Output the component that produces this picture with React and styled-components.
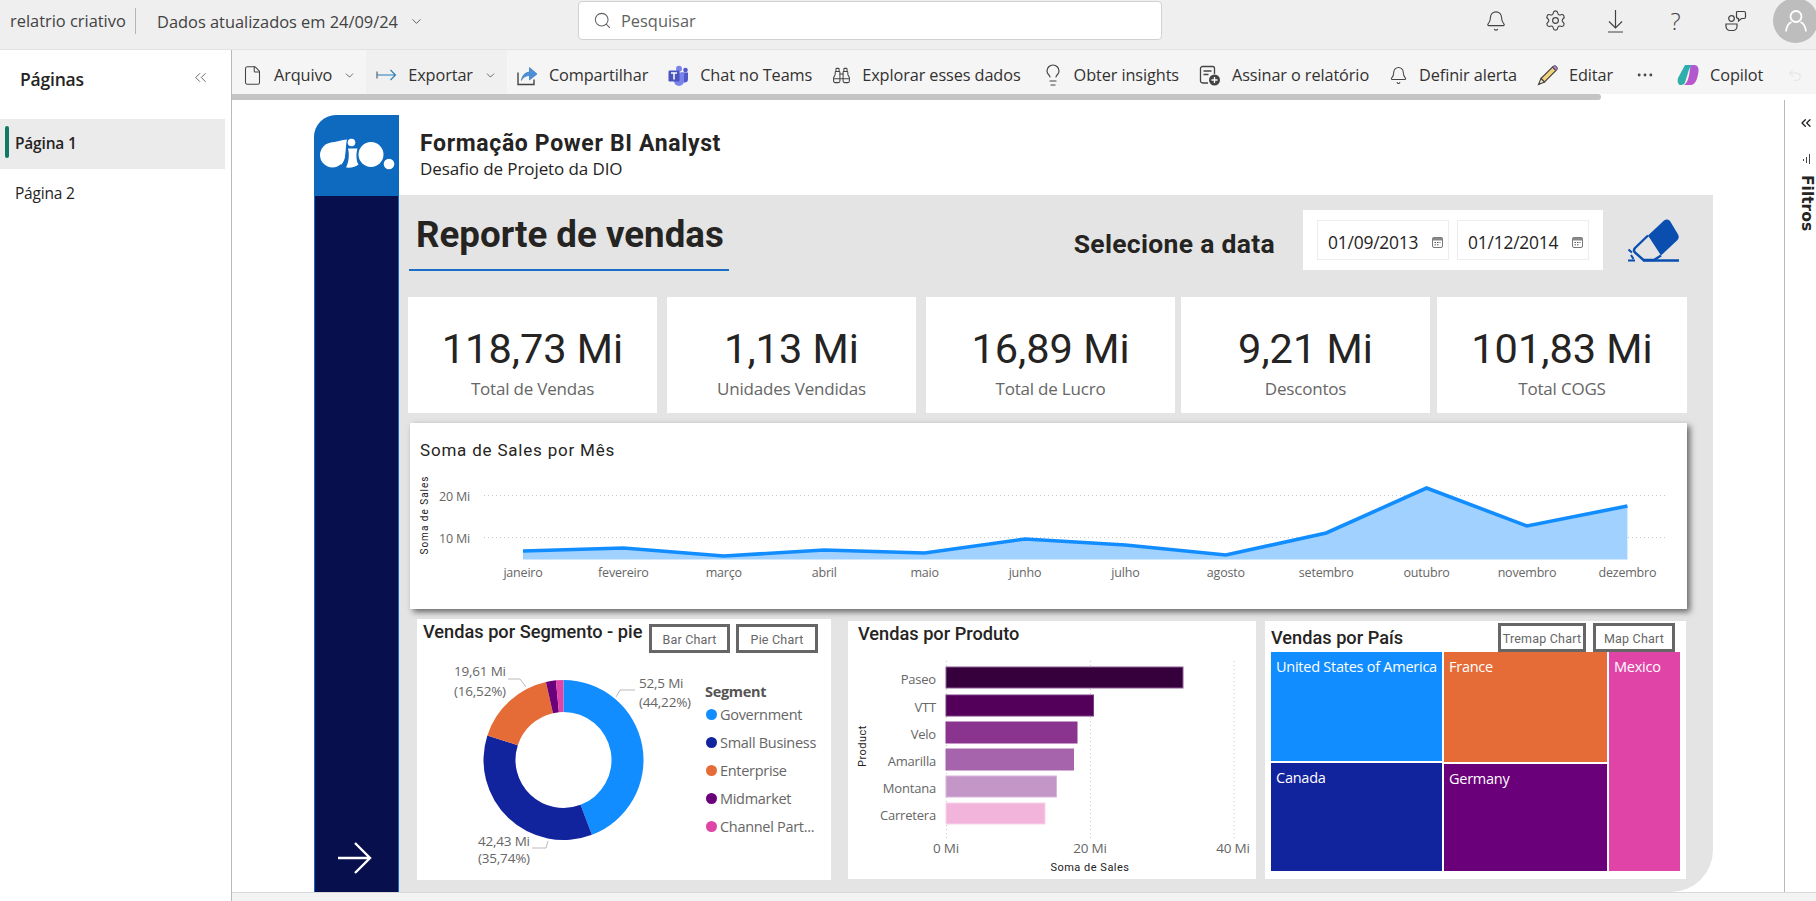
import React from 'react';
import styled, { createGlobalStyle } from 'styled-components';
import {
  Search, ChevronDown, ChevronsLeft, Bell, Settings, File, Binoculars, Lightbulb, Ellipsis, Undo2,
} from 'lucide-react';

const UI = `"Open Sans", "Noto Sans", sans-serif`;
const DIN = `Roboto, "Noto Sans", sans-serif`;

const Global = createGlobalStyle`
  html, body { margin: 0; padding: 0; background: #fff; }
  body { font-family: ${UI}; color: #333; }
  * { box-sizing: border-box; }
`;

const Page = styled.div`
  width: 1816px;
  height: 901px;
  display: flex;
  flex-direction: column;
  overflow: hidden;
`;

const TopBar = styled.header`
  height: 50px;
  flex: none;
  display: flex;
  align-items: flex-start;
  background: #efefef;
  border-bottom: 1px solid #e2e2e2;
  font-size: 16.4px;
  color: #424242;
`;

const AppName = styled.span`
  margin-top: 8px;
  padding: 0 0 0 10px;
  width: 136px;
  height: 26px;
  line-height: 25px;
  white-space: nowrap;
  border-right: 1px solid #b5b5b5;
`;

const Updated = styled.span`
  margin: 8px 0 0 21px;
  width: 421px;
  height: 26px;
  line-height: 25px;
  display: flex;
  align-items: center;
  gap: 11px;
  white-space: nowrap;
`;

const SearchBox = styled.div`
  margin-top: 1px;
  width: 584px;
  height: 39px;
  display: flex;
  align-items: center;
  gap: 9px;
  padding-left: 14px;
  background: #fff;
  border: 1px solid #d1d1d1;
  border-radius: 4px;
  color: #616161;
`;

const TopIcons = styled.div`
  margin: -2px 0 0 auto;
  display: flex;
  align-items: center;
  gap: 37px;
`;

const TopIcon = styled.span`
  width: 23px;
  height: 26px;
  display: flex;
  align-items: center;
  justify-content: center;
  color: #424242;
  font-size: 24px;
  font-weight: 300;
`;

const Avatar = styled.span`
  width: 45px;
  height: 45px;
  margin: 0 -2px 0 -11px;
  border-radius: 50%;
  background: #bdbdbd;
  display: flex;
  align-items: center;
  justify-content: center;
`;

const Body = styled.div`
  flex: 1;
  display: flex;
  min-height: 0;
`;

const Sidebar = styled.aside`
  width: 232px;
  flex: none;
  border-right: 1px solid #b9b9b9;
  background: #fff;
`;

const SideHead = styled.div`
  height: 69px;
  padding: 17px 21px 0 20px;
  display: flex;
  justify-content: space-between;
  align-items: flex-start;
  font-size: 17.5px;
  font-weight: 600;
  color: #252423;
  letter-spacing: -0.2px;
  svg { color: #555; margin-top: 1px; }
`;

const PageItem = styled.div`
  width: 225px;
  height: 50px;
  padding: 0 0 2px 15px;
  display: flex;
  align-items: center;
  position: relative;
  font-size: 15.5px;
  letter-spacing: -0.2px;
  font-weight: ${(p) => (p.$active ? 600 : 400)};
  background: ${(p) => (p.$active ? '#ebebeb' : 'transparent')};
  color: #252423;
  &::before {
    content: '';
    display: ${(p) => (p.$active ? 'block' : 'none')};
    position: absolute;
    left: 5px;
    top: 7px;
    width: 4px;
    height: 32px;
    border-radius: 2px;
    background: #117865;
  }
`;

const Main = styled.main`
  flex: 1;
  display: flex;
  flex-direction: column;
  min-width: 0;
`;

const Toolbar = styled.nav`
  height: 44px;
  flex: none;
  display: flex;
  align-items: stretch;
  background: #f5f5f5;
  font-size: 16.3px;
  letter-spacing: -0.1px;
  color: #323130;
`;

const ToolItem = styled.span`
  display: flex;
  align-items: center;
  gap: ${(p) => p.$gap || 11}px;
  padding: 6px ${(p) => p.$pad ?? 10}px 0;
  white-space: nowrap;
  background: ${(p) => (p.$hover ? '#f0f0f0' : 'transparent')};
`;

const ScrollTrack = styled.div`
  height: 6px;
  flex: none;
  background: #fff;
`;

const ScrollThumb = styled.div`
  width: 1369px;
  height: 6px;
  background: #c4c4c4;
  border-radius: 0 3px 3px 0;
`;

const Content = styled.div`
  flex: 1;
  display: flex;
  min-height: 0;
`;

const Canvas = styled.div`
  flex: 1;
  padding: 15px 0 0 82px;
  display: flex;
  min-width: 0;
`;

const FilterRail = styled.div`
  width: 32px;
  flex: none;
  border-left: 1px solid #b9b9b9;
  display: flex;
  flex-direction: column;
  align-items: center;
  padding: 15px 0 0 10px;
  color: #252423;
`;

const FilterBars = styled.svg`
  margin: 22px 0 0 2px;
`;

const FilterText = styled.span`
  writing-mode: vertical-rl;
  font-family: "DejaVu Sans", sans-serif;
  font-size: 15.5px;
  font-weight: 700;
  line-height: 16px;
  margin: 10px 0 0 2px;
`;

const ReportRail = styled.div`
  width: 85px;
  flex: none;
  display: flex;
  flex-direction: column;
`;

const LogoBlock = styled.div`
  height: 81px;
  background: #0d6abf;
  border-radius: 22px 0 0 0;
  overflow: hidden;
`;

const NavyBlock = styled.div`
  flex: 1;
  background: #07104d;
  border: 1px solid #0d6abf;
  border-width: 0 1px;
  display: flex;
  align-items: flex-end;
  padding: 0 0 18px 23px;
`;

const ReportBody = styled.div`
  width: 1314px;
  flex: none;
  display: flex;
  flex-direction: column;
`;

const ReportHead = styled.div`
  height: 80px;
  flex: none;
  padding: 15px 0 0 21px;
`;

const ReportTitle = styled.h1`
  margin: 0;
  font: 700 23px/27px ${DIN};
  letter-spacing: 0.65px;
  color: #252423;
`;

const ReportSub = styled.p`
  margin: 1px 0 0;
  font-size: 17px;
  line-height: 22px;
  letter-spacing: -0.1px;
  color: #252423;
`;

const GrayPanel = styled.section`
  flex: 1;
  background: #e4e4e4;
  border-radius: 0 0 42px 0;
  min-height: 0;
`;

const HeadRow = styled.div`
  height: 102px;
  display: flex;
  align-items: flex-start;
  padding-right: 33px;
`;

const SalesTitle = styled.h2`
  margin: 0 0 0 10px;
  width: 320px;
  height: 76px;
  padding: 18px 0 0 7px;
  border-bottom: 2px solid #1c6fc9;
  font: 700 36.7px/44px ${DIN};
  color: #252423;
`;

const DateLabel = styled.span`
  margin: 33px 28px 0 auto;
  font: 700 26.5px/32px ${DIN};
  letter-spacing: 0.3px;
  color: #252423;
`;

const DateBox = styled.div`
  margin-top: 15px;
  width: 300px;
  height: 60px;
  background: #fff;
  display: flex;
  align-items: center;
  justify-content: center;
  gap: 8px;
`;

const DateInput = styled.div`
  width: 132px;
  height: 40px;
  border: 1px solid #ededed;
  display: flex;
  align-items: center;
  justify-content: space-between;
  padding: 4px 5px 0 10px;
  font-size: 17.4px;
  letter-spacing: -0.2px;
  color: #252423;
`;

const EraserWrap = styled.span`
  margin: 24px 0 0 25px;
  display: block;
  height: 43px;
`;

const KpiRow = styled.div`
  display: flex;
  margin-left: 9px;
`;

const KpiCard = styled.div`
  width: ${(p) => p.$w}px;
  margin-right: ${(p) => p.$gap}px;
  height: 116px;
  background: #fff;
  display: flex;
  flex-direction: column;
  align-items: center;
  padding-top: 26px;
  flex: none;
`;

const KpiValue = styled.span`
  font: 400 41.5px/52px ${DIN};
  color: #252423;
`;

const KpiLabel = styled.span`
  margin-top: 2px;
  font-size: 17px;
  line-height: 24px;
  letter-spacing: -0.2px;
  color: #666;
`;

const LineCard = styled.div`
  margin: 10px 0 0 11px;
  width: 1277px;
  height: 186px;
  padding-top: 17px;
  background: #fff;
  box-shadow: 3px 3px 6px rgba(0, 0, 0, 0.55);
`;

const CardTitle = styled.div`
  margin-left: 10px;
  height: 26px;
  font: 400 17px/20px ${DIN};
  letter-spacing: 0.8px;
  color: #252423;
`;

const BottomRow = styled.div`
  margin-top: 10px;
  padding-left: 18px;
  display: flex;
  align-items: flex-start;
`;

const Panel = styled.div`
  flex: none;
  width: ${(p) => p.$w}px;
  height: ${(p) => p.$h}px;
  margin-top: ${(p) => p.$top || 0}px;
  margin-right: ${(p) => p.$gap || 0}px;
  background: #fff;
`;

const PanelHead = styled.div`
  display: flex;
  height: ${(p) => p.$h}px;
`;

const PanelTitle = styled.div`
  width: ${(p) => p.$w}px;
  margin-left: ${(p) => p.$left || 6}px;
  margin-top: ${(p) => p.$top || 0}px;
  flex: none;
  overflow: hidden;
  white-space: nowrap;
  font: 500 18.2px/24px ${DIN};
  color: #252423;
`;

const ToggleBtn = styled.span`
  flex: none;
  width: ${(p) => p.$w}px;
  height: 29px;
  margin: ${(p) => p.$top}px ${(p) => p.$right}px 0 0;
  padding-top: 1px;
  border: 3px solid #666;
  display: flex;
  align-items: center;
  justify-content: center;
  white-space: nowrap;
  font: 400 12.5px ${DIN};
  letter-spacing: 0.2px;
  color: #666;
  background: #fff;
`;

const SegBody = styled.div`
  display: flex;
`;

const Legend = styled.div`
  padding: 27px 0 0 3px;
  font-size: 14.5px;
  letter-spacing: -0.3px;
  color: #666;
`;

const LegendHead = styled.div`
  font-weight: 700;
  color: #555;
  line-height: 22px;
  margin-bottom: -2px;
`;

const LegendRow = styled.div`
  height: 27.8px;
  display: flex;
  align-items: center;
  gap: 3px;
  margin-left: 1px;
  white-space: nowrap;
  &::before {
    content: '';
    width: 11px;
    height: 11px;
    border-radius: 50%;
    background: ${(p) => p.$c};
  }
`;

const Treemap = styled.div`
  display: flex;
  gap: 2px;
  margin-left: 6px;
  height: 219px;
`;

const TreeCol = styled.div`
  width: ${(p) => p.$w}px;
  display: flex;
  flex-direction: column;
  gap: 2px;
`;

const TreeCell = styled.div`
  flex: ${(p) => (p.$h ? `0 0 ${p.$h}px` : 1)};
  padding: 5px 5px;
  background: ${(p) => p.$c};
  color: #fff;
  font-size: 14.5px;
  line-height: 20px;
  letter-spacing: -0.25px;
  white-space: nowrap;
  overflow: hidden;
`;

const BottomBar = styled.div`
  height: 9px;
  flex: none;
  background: #f3f3f3;
  border-top: 1px solid #d9d9d9;
`;

const ChartSvg = styled.svg`
  display: block;
  flex: none;
`;

const ChartLabel = styled.text`
  font-family: ${UI};
  font-size: ${(p) => p.$size || 12.5}px;
  letter-spacing: -0.2px;
  fill: #666;
`;

const AxisTitle = styled.text`
  font-family: ${DIN};
  font-size: ${(p) => p.$size || 11}px;
  font-weight: 400;
  fill: #222;
  letter-spacing: ${(p) => p.$track || 0.5}px;
`;

// ---- icons drawn by hand
const DioLogo = () => (
  <svg width="85" height="81" viewBox="0 0 85 81">
    <g fill="#fff">
      <circle cx="18.500" cy="40" r="12.500" />
      <path d="M16 28C22 27 28 25 33 24.500C31 32 33 44 27 50Z" />
      <circle cx="37.500" cy="27.500" r="3.800" />
      <path d="M34 33.500L43.500 33.500C42 38 42 46 44.500 49.500C42 52 37 53 32 52.500C35 47 35.500 39 34 33.500Z" />
      <circle cx="57" cy="39.500" r="12.500" />
      <circle cx="75" cy="49" r="5.300" />
    </g>
  </svg>
);

const ExportIcon = () => (
  <svg width="21" height="14" viewBox="0 0 21 14" fill="none" stroke="#2b7cb3" strokeWidth="1.1">
    <path d="M1 3.500v7" stroke="#555" />
    <path d="M1 7h18.500M14.500 2l5 5-5 5" />
  </svg>
);

const ShareIcon = () => (
  <svg width="21" height="21" viewBox="0 0 21 21" fill="none">
    <path d="M1 7.500v12h16v-5" stroke="#444" strokeWidth="1.400" />
    <path d="M4.500 15.500c.5-5 3.500-8 8-8.500V2.500l7.500 6.500-7.500 6v-4.500c-3.500 0-6 1.500-8 4.500z" fill="#4a90d9" stroke="#2b6fb0" strokeWidth=".6" />
  </svg>
);

const TeamsIcon = () => (
  <svg width="21" height="21" viewBox="0 0 21 21">
    <circle cx="11" cy="3.800" r="3" fill="#7b83eb" />
    <circle cx="17.500" cy="5" r="2.300" fill="#5059c9" />
    <path d="M13 7.500h7v6.500a3.500 3.500 0 0 1-7 0z" fill="#5059c9" />
    <path d="M6 7.500h10v8.500a5 5 0 0 1-10 0z" fill="#7b83eb" />
    <rect x="0.500" y="5.500" width="11" height="11" rx="1.200" fill="#4b53bc" />
    <path d="M3 8h6M6 8v6.500" stroke="#fff" strokeWidth="1.500" />
  </svg>
);

const SubscribeIcon = () => (
  <svg width="22" height="21" viewBox="0 0 22 21" fill="none">
    <path d="M9 18H3.500A2 2 0 0 1 1.500 16V3.500A2 2 0 0 1 3.500 1.500h10a2 2 0 0 1 2 2V9" stroke="#444" strokeWidth="1.300" />
    <path d="M4.500 6h8M4.500 9.500h5" stroke="#444" strokeWidth="1.300" />
    <circle cx="15.500" cy="15" r="5.500" fill="#444" />
    <path d="M15.500 12v6M12.500 15h6" stroke="#fff" strokeWidth="1.300" />
  </svg>
);

const PencilIcon = () => (
  <svg width="21" height="21" viewBox="0 0 21 21">
    <path d="M4 13.500L15.500 2l3.500 3.500L7.500 17z" fill="#f2d27a" stroke="#444" strokeWidth="1.100" />
    <path d="M15.500 2l1-1a1.500 1.500 0 0 1 2.200 0l1.300 1.300a1.500 1.500 0 0 1 0 2.200l-1 1z" fill="#b77fc9" stroke="#444" strokeWidth="1" />
    <path d="M4 13.500L1.500 19.500 7.500 17z" fill="#f7e8c4" stroke="#444" strokeWidth="1.100" />
    <path d="M1.500 19.500l.8-2 1.200 1.200z" fill="#333" />
  </svg>
);

const CopilotIcon = () => (
  <svg width="22" height="22" viewBox="0 0 22 22" fill="none">
    <path d="M8 1h7.500c-2.500 2-4 5-5 9.500L8.500 17c-.6 2.500-2 4-4.500 4H3C.8 20.500 .2 17 1 14z" fill="url(#cpA)" />
    <path d="M15 1h2.500c3 0 4.500 3 4 6.500-.6 5-2 9-3.500 11-1 1.500-2.500 2.500-4 2.500H7c2.500-1.500 4-5 5-9.500l1-6.500c.3-2 .8-3.500 2-4z" fill="url(#cpB)" />
    <defs>
      <linearGradient id="cpA" x1="13" y1="1" x2="2" y2="20">
        <stop stopColor="#1e9be8" />
        <stop offset=".5" stopColor="#3fbf78" />
        <stop offset="1" stopColor="#f7c52e" />
      </linearGradient>
      <linearGradient id="cpB" x1="20" y1="2" x2="8" y2="21">
        <stop stopColor="#5a6ff0" />
        <stop offset=".55" stopColor="#d44fc0" />
        <stop offset="1" stopColor="#f7603f" />
      </linearGradient>
    </defs>
  </svg>
);

const DownloadIcon = () => (
  <svg width="17" height="24" viewBox="0 0 17 24" fill="none" stroke="#424242" strokeWidth="1.200">
    <path d="M8.500 1v18M2 12.500L8.500 19l6.500-6.500M1 23h15" />
  </svg>
);

const PeopleChatIcon = () => (
  <svg width="22" height="22" viewBox="0 0 22 22" fill="none" stroke="#424242" strokeWidth="1.200">
    <circle cx="6.500" cy="8.500" r="2.800" />
    <path d="M1 14h11v2.500a4 4 0 0 1-4 4H5a4 4 0 0 1-4-4z" />
    <path d="M11.500 1.500h7.500a1.500 1.500 0 0 1 1.500 1.500v4a1.500 1.500 0 0 1-1.500 1.500h-2.500l-3 2.500v-2.500a2 2 0 0 1-2-2V3a1.500 1.500 0 0 1 .5-1.500z" />
  </svg>
);

const AvatarIcon = () => (
  <svg width="22" height="22" viewBox="0 0 22 22" fill="none" stroke="#fff" strokeWidth="1.800">
    <circle cx="11" cy="6.500" r="5.500" />
    <path d="M1 21.500c.5-5 2.500-8 5.500-9.500M21 21.500c-.5-5-2.500-8-5.500-9.500" />
  </svg>
);

const CalendarIcon = () => (
  <svg width="11" height="11" viewBox="0 0 11 11">
    <rect x=".5" y=".5" width="10" height="10" rx="1.500" fill="#fff" stroke="#777" />
    <rect x=".5" y=".5" width="10" height="3" fill="#888" />
    <path d="M2.500 5.500h1.500M5 5.500h1.500M7.500 5.500h1M2.500 7.800h1.500M5 7.800h1.500" stroke="#555" />
  </svg>
);

const EraserIcon = () => (
  <svg width="52" height="43" viewBox="0 0 52 43" fill="none">
    <path d="M20 16.500L36 1.500Q39 -.5 42 2L49.500 14.500Q52 18 49.500 21L33 36.500Z" fill="#0a4fb0" />
    <path d="M20 16.500L7 29Q5 31.500 7 33.500L15.500 41H26L33 36.500" stroke="#0a4fb0" strokeWidth="2.400" strokeLinejoin="round" />
    <path d="M15 41.500H51" stroke="#0a4fb0" strokeWidth="2.400" />
    <path d="M0.500 30.500l3.500 3M3 36l2.500 4M0 41.500h7" stroke="#0a4fb0" strokeWidth="2" />
  </svg>
);

const ArrowIcon = () => (
  <svg width="34" height="32" viewBox="0 0 34 32" fill="none" stroke="#fff" strokeWidth="2.400">
    <path d="M0 16h32M17 1l15 15-15 15" />
  </svg>
);

// ---- data
const kpis = [
  { value: '118,73 Mi', label: 'Total de Vendas', w: 249, gap: 10 },
  { value: '1,13 Mi', label: 'Unidades Vendidas', w: 249, gap: 10 },
  { value: '16,89 Mi', label: 'Total de Lucro', w: 249, gap: 6 },
  { value: '9,21 Mi', label: 'Descontos', w: 249, gap: 7 },
  { value: '101,83 Mi', label: 'Total COGS', w: 250, gap: 0 },
];

const months = [
  ['janeiro', 552], ['fevereiro', 549], ['março', 557], ['abril', 551], ['maio', 554], ['junho', 540],
  ['julho', 546], ['agosto', 556], ['setembro', 534], ['outubro', 489], ['novembro', 527], ['dezembro', 507],
];

const segments = [
  { name: 'Government', pct: 44.22, color: '#118dff' },
  { name: 'Small Business', pct: 35.74, color: '#12239e' },
  { name: 'Enterprise', pct: 16.52, color: '#e66c37' },
  { name: 'Midmarket', pct: 2.0, color: '#6b007b' },
  { name: 'Channel Part...', pct: 1.52, color: '#e044a7' },
];

const products = [
  { name: 'Paseo', y: 46, end: 335, color: '#36003d', line: '#8a5c90' },
  { name: 'VTT', y: 74, end: 245.5, color: '#52005a', line: '#7c3a84' },
  { name: 'Velo', y: 101, end: 229, color: '#8a3490', line: '#8a3490' },
  { name: 'Amarilla', y: 128, end: 225.5, color: '#a564ab', line: '#a564ab' },
  { name: 'Montana', y: 155, end: 208.5, color: '#c496c7', line: '#d9b4dc' },
  { name: 'Carretera', y: 182, end: 197, color: '#f3b4db', line: '#f8d4ea' },
];

const arc = (cx, cy, r0, r1, a0, a1) => {
  const pt = (r, a) => [cx + r * Math.sin(a), cy - r * Math.cos(a)];
  const [x0, y0] = pt(r1, a0);
  const [x1, y1] = pt(r1, a1);
  const [x2, y2] = pt(r0, a1);
  const [x3, y3] = pt(r0, a0);
  const big = a1 - a0 > Math.PI ? 1 : 0;
  return `M${x0} ${y0}A${r1} ${r1} 0 ${big} 1 ${x1} ${y1}L${x2} ${y2}A${r0} ${r0} 0 ${big} 0 ${x3} ${y3}Z`;
};

function LineChart() {
  const pts = months.map(([, v], i) => [113 + i * 100.4, v - 467]);
  const line = pts.map((p) => p.join(',')).join(' ');
  const area = `113,93.500 ${line} ${pts[11][0]},93.500`;
  return (
    <ChartSvg width="1277" height="130">
      <AxisTitle $size={10} $track={1} transform="translate(18 49) rotate(-90)" textAnchor="middle">Soma de Sales</AxisTitle>
      <ChartLabel x="29" y="35">20 Mi</ChartLabel>
      <ChartLabel x="29" y="77">10 Mi</ChartLabel>
      <path d="M74 29.500H1258M74 71.500H1258" stroke="#c8c8c8" strokeDasharray="1 3" />
      <polygon points={area} fill="#a0d1ff" />
      <polyline points={line} fill="none" stroke="#118dff" strokeWidth="3.600" />
      {months.map(([m], i) => (
        <ChartLabel key={m} x={113 + i * 100.4} y="111" textAnchor="middle">{m}</ChartLabel>
      ))}
    </ChartSvg>
  );
}

function Donut() {
  let acc = 0;
  const cx = 146.5;
  const cy = 106;
  return (
    <ChartSvg width="285" height="226">
      {segments.map((s) => {
        const a0 = (acc / 100) * Math.PI * 2;
        acc += s.pct;
        const a1 = (acc / 100) * Math.PI * 2;
        return <path key={s.name} d={arc(cx, cy, 48, 80, a0, a1)} fill={s.color} />;
      })}
      <path d="M218 36H203L199 43M91 25H103L109 33M115 194H129L131 187" fill="none" stroke="#bbb" />
      <ChartLabel x="222" y="34" $size={13.5}>52,5 Mi</ChartLabel>
      <ChartLabel x="222" y="53" $size={13.5}>(44,22%)</ChartLabel>
      <ChartLabel x="37" y="22" $size={13.5}>19,61 Mi</ChartLabel>
      <ChartLabel x="37" y="42" $size={13.5}>(16,52%)</ChartLabel>
      <ChartLabel x="61" y="192" $size={13.5}>42,43 Mi</ChartLabel>
      <ChartLabel x="61" y="209" $size={13.5}>(35,74%)</ChartLabel>
    </ChartSvg>
  );
}

function BarChart() {
  return (
    <ChartSvg width="408" height="228">
      <path d="M98.500 10V190M242.500 10V190M386 10V190" stroke="#c8c8c8" strokeDasharray="1 3" />
      {products.map((p) => (
        <g key={p.name}>
          <rect x="98" y={p.y - 30} width={p.end - 98} height="21" fill={p.color} stroke={p.line} />
          <ChartLabel x="88" y={p.y - 13} textAnchor="end" $size={13}>{p.name}</ChartLabel>
        </g>
      ))}
      <ChartLabel x="98" y="202" textAnchor="middle" $size={13.5}>0 Mi</ChartLabel>
      <ChartLabel x="242" y="202" textAnchor="middle" $size={13.5}>20 Mi</ChartLabel>
      <ChartLabel x="385" y="202" textAnchor="middle" $size={13.5}>40 Mi</ChartLabel>
      <AxisTitle x="242" y="220" textAnchor="middle">Soma de Sales</AxisTitle>
      <AxisTitle transform="translate(18 95) rotate(-90)" textAnchor="middle">Product</AxisTitle>
    </ChartSvg>
  );
}

export default function App() {
  return (
    <Page>
      <Global />
      <TopBar>
        <AppName>relatrio criativo</AppName>
        <Updated>Dados atualizados em 24/09/24 <ChevronDown size={15} strokeWidth={1.3} /></Updated>
        <SearchBox><Search size={19} strokeWidth={1.3} /> Pesquisar</SearchBox>
        <TopIcons>
          <TopIcon><Bell size={22} strokeWidth={1.2} /></TopIcon>
          <TopIcon><Settings size={23} strokeWidth={1.2} /></TopIcon>
          <TopIcon><DownloadIcon /></TopIcon>
          <TopIcon>?</TopIcon>
          <TopIcon><PeopleChatIcon /></TopIcon>
          <Avatar><AvatarIcon /></Avatar>
        </TopIcons>
      </TopBar>
      <Body>
        <Sidebar>
          <SideHead>Páginas <ChevronsLeft size={19} strokeWidth={1.1} /></SideHead>
          <PageItem $active>Página 1</PageItem>
          <PageItem>Página 2</PageItem>
        </Sidebar>
        <Main>
          <Toolbar>
            <ToolItem>
              <File size={21} strokeWidth={1.2} color="#444" /> Arquivo <ChevronDown size={13} strokeWidth={1.3} />
            </ToolItem>
            <ToolItem $hover><ExportIcon /> Exportar <ChevronDown size={13} strokeWidth={1.3} /></ToolItem>
            <ToolItem><ShareIcon /> Compartilhar</ToolItem>
            <ToolItem><TeamsIcon /> Chat no Teams</ToolItem>
            <ToolItem><Binoculars size={19} strokeWidth={1.3} color="#444" /> Explorar esses dados</ToolItem>
            <ToolItem $gap={9}><Lightbulb size={24} strokeWidth={1.2} color="#444" /> Obter insights</ToolItem>
            <ToolItem><SubscribeIcon /> Assinar o relatório</ToolItem>
            <ToolItem><Bell size={19} strokeWidth={1.3} color="#444" /> Definir alerta</ToolItem>
            <ToolItem><PencilIcon /> Editar</ToolItem>
            <ToolItem $pad={12}><Ellipsis size={20} strokeWidth={1.5} color="#444" /></ToolItem>
            <ToolItem><CopilotIcon /> Copilot</ToolItem>
            <ToolItem $pad={14}><Undo2 size={16} strokeWidth={1.2} color="#ddd" /></ToolItem>
          </Toolbar>
          <ScrollTrack><ScrollThumb /></ScrollTrack>
          <Content>
            <Canvas>
              <ReportRail>
                <LogoBlock><DioLogo /></LogoBlock>
                <NavyBlock><ArrowIcon /></NavyBlock>
              </ReportRail>
              <ReportBody>
                <ReportHead>
                  <ReportTitle>Formação Power BI Analyst</ReportTitle>
                  <ReportSub>Desafio de Projeto da DIO</ReportSub>
                </ReportHead>
                <GrayPanel>
                  <HeadRow>
                    <SalesTitle>Reporte de vendas</SalesTitle>
                    <DateLabel>Selecione a data</DateLabel>
                    <DateBox>
                      <DateInput>01/09/2013 <CalendarIcon /></DateInput>
                      <DateInput>01/12/2014 <CalendarIcon /></DateInput>
                    </DateBox>
                    <EraserWrap><EraserIcon /></EraserWrap>
                  </HeadRow>
                  <KpiRow>
                    {kpis.map((k) => (
                      <KpiCard key={k.label} $w={k.w} $gap={k.gap}>
                        <KpiValue>{k.value}</KpiValue>
                        <KpiLabel>{k.label}</KpiLabel>
                      </KpiCard>
                    ))}
                  </KpiRow>
                  <LineCard>
                    <CardTitle>Soma de Sales por Mês</CardTitle>
                    <LineChart />
                  </LineCard>
                  <BottomRow>
                    <Panel $w={414} $h={261} $gap={17}>
                      <PanelHead $h={35}>
                        <PanelTitle $w={226} $top={1}>Vendas por Segmento - pie</PanelTitle>
                        <ToggleBtn $w={81} $top={5} $right={6}>Bar Chart</ToggleBtn>
                        <ToggleBtn $w={82} $top={5} $right={0}>Pie Chart</ToggleBtn>
                      </PanelHead>
                      <SegBody>
                        <Donut />
                        <Legend>
                          <LegendHead>Segment</LegendHead>
                          {segments.map((s) => <LegendRow key={s.name} $c={s.color}>{s.name}</LegendRow>)}
                        </Legend>
                      </SegBody>
                    </Panel>
                    <Panel $w={408} $h={258} $top={2} $gap={9}>
                      <PanelHead $h={30}><PanelTitle $w={300} $left={10} $top={1}>Vendas por Produto</PanelTitle></PanelHead>
                      <BarChart />
                    </Panel>
                    <Panel $w={421} $h={258} $top={2}>
                      <PanelHead $h={31}>
                        <PanelTitle $w={227} $top={5}>Vendas por País</PanelTitle>
                        <ToggleBtn $w={88} $top={2} $right={7}>Tremap Chart</ToggleBtn>
                        <ToggleBtn $w={82} $top={2} $right={0}>Map Chart</ToggleBtn>
                      </PanelHead>
                      <Treemap>
                        <TreeCol $w={171}>
                          <TreeCell $h={109} $c="#118dff">United States of America</TreeCell>
                          <TreeCell $c="#12239e">Canada</TreeCell>
                        </TreeCol>
                        <TreeCol $w={163}>
                          <TreeCell $h={110} $c="#e66c37">France</TreeCell>
                          <TreeCell $c="#6b007b">Germany</TreeCell>
                        </TreeCol>
                        <TreeCol $w={71}>
                          <TreeCell $c="#e044a7">Mexico</TreeCell>
                        </TreeCol>
                      </Treemap>
                    </Panel>
                  </BottomRow>
                </GrayPanel>
              </ReportBody>
            </Canvas>
            <FilterRail>
              <ChevronsLeft size={16} strokeWidth={2} />
              <FilterBars width="10" height="12" viewBox="0 0 10 12" fill="none" stroke="#444">
                <path d="M1.500 6v2M4.500 4v6M7.500 1v10" />
              </FilterBars>
              <FilterText>Filtros</FilterText>
            </FilterRail>
          </Content>
          <BottomBar />
        </Main>
      </Body>
    </Page>
  );
}
